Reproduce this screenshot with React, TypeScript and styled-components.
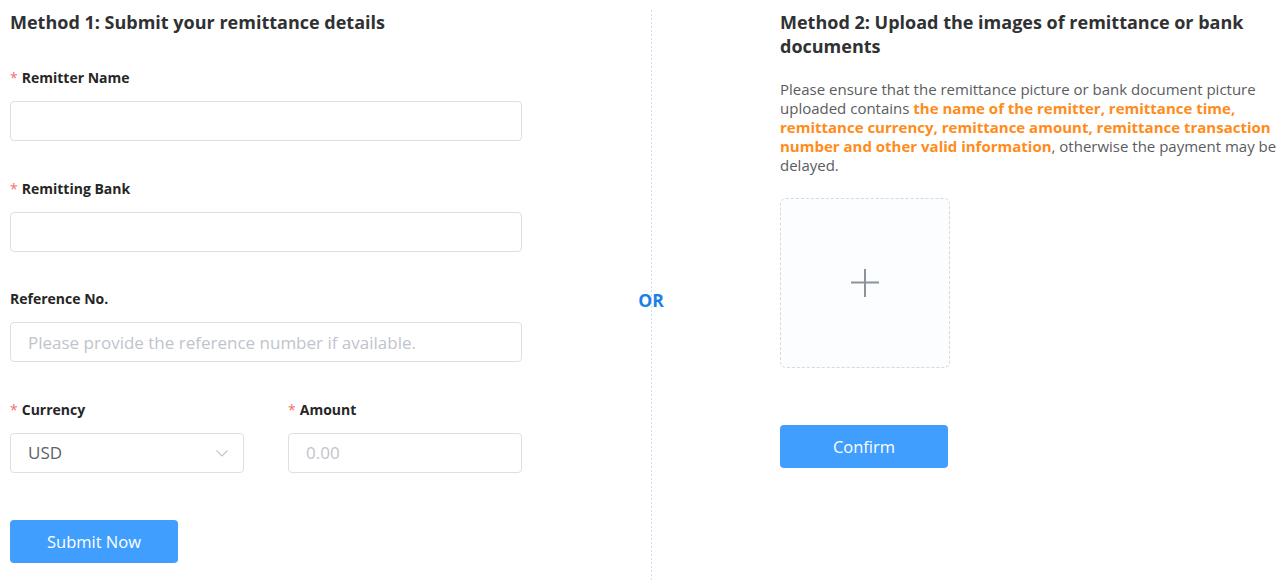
import React from "react";
import styled, { createGlobalStyle } from "styled-components";

const Global = createGlobalStyle`
  html, body { margin: 0; padding: 0; background: #fff; }
  body { font-family: "Open Sans", "Noto Sans", Arial, sans-serif; color: #303133; }
  * { box-sizing: border-box; }
`;

const Page = styled.div`
  display: flex;
  padding: 10px 3px 0 10px;
  min-height: 582px;
`;

const LeftCol = styled.div`
  width: 512px;
  flex: none;
  display: flex;
  flex-direction: column;
`;

const Middle = styled.div`
  width: 258px;
  flex: none;
  position: relative;
  display: flex;
  justify-content: center;
`;

const Divider = styled.div`
  width: 1px;
  height: 572px;
  margin-left: 1px;
  background-image: repeating-linear-gradient(
    to bottom,
    #c4dff9 0,
    #c4dff9 2px,
    transparent 2px,
    transparent 4px
  );
`;

const OrText = styled.div`
  position: absolute;
  top: 279px;
  left: 0;
  right: 0;
  text-align: center;
  font-weight: 700;
  font-size: 17.5px;
  color: #1a7fe6;
  line-height: 22px;
`;

const RightCol = styled.div`
  flex: 1;
  display: flex;
  flex-direction: column;
`;

const Title = styled.h2`
  margin: 0;
  font-size: 18px;
  line-height: 24px;
  font-weight: 700;
  color: #303133;
  padding-right: 6px;
`;

const Form = styled.div`
  margin-top: 34px;
  display: flex;
  flex-direction: column;
  gap: 37.5px;
`;

const Row = styled.div`
  display: flex;
  gap: 44px;
`;

const Field = styled.div<{ $w?: number }>`
  display: flex;
  flex-direction: column;
  gap: 13px;
  width: ${(p) => (p.$w ? `${p.$w}px` : "100%")};
`;

const Label = styled.label`
  font-size: 14px;
  line-height: 20px;
  font-weight: 700;
  color: #262626;
`;

const Star = styled.span`
  color: #f56c6c;
  margin-right: 4px;
  font-weight: 400;
`;

const Input = styled.input`
  width: 100%;
  height: 40px;
  border: 1px solid #dcdfe6;
  border-radius: 4px;
  padding: 0 17px;
  font-family: inherit;
  font-size: 17px;
  color: #606266;
  outline: none;
  background: #fff;
  &::placeholder { color: #c0c4cc; }
`;

const SelectBox = styled.div`
  height: 40px;
  border: 1px solid #dcdfe6;
  border-radius: 4px;
  padding: 0 14px 0 17px;
  display: flex;
  align-items: center;
  justify-content: space-between;
  font-size: 17px;
  color: #606266;
`;

const Button = styled.button`
  width: 168px;
  height: 43px;
  border: none;
  border-radius: 4px;
  background: #409eff;
  color: #fff;
  font-family: inherit;
  font-size: 16.5px;
  cursor: pointer;
`;

const SubmitWrap = styled.div`
  margin-top: 47px;
`;

const Para = styled.p`
  margin: 22px 0 0;
  font-size: 15px;
  line-height: 19px;
  color: #5a5c61;
`;

const Hl = styled.span`
  color: #ff8c1a;
  font-weight: 700;
`;

const Upload = styled.div`
  margin-top: 23px;
  width: 170px;
  height: 170px;
  border: 1px dashed #d9d9d9;
  border-radius: 6px;
  background: #fbfdff;
  display: flex;
  align-items: center;
  justify-content: center;
`;

const ConfirmWrap = styled.div`
  margin-top: 57px;
`;

const Chevron = () => (
  <svg width="14" height="14" viewBox="0 0 14 14" fill="none">
    <path d="M1.5 4.5 L7 10 L12.5 4.5" stroke="#c0c4cc" strokeWidth="1.1" />
  </svg>
);

const Plus = () => (
  <svg width="28" height="28" viewBox="0 0 28 28">
    <rect x="0" y="12.5" width="28" height="2" fill="#8c939d" />
    <rect x="13" y="0" width="2" height="28" fill="#8c939d" />
  </svg>
);

export default function App() {
  return (
    <>
      <Global />
      <Page>
        <LeftCol>
          <Title>Method 1: Submit your remittance details</Title>
          <Form>
            <Field>
              <Label><Star>*</Star>Remitter Name</Label>
              <Input />
            </Field>
            <Field>
              <Label><Star>*</Star>Remitting Bank</Label>
              <Input />
            </Field>
            <Field>
              <Label>Reference No.</Label>
              <Input placeholder="Please provide the reference number if available." />
            </Field>
            <Row>
              <Field $w={234}>
                <Label><Star>*</Star>Currency</Label>
                <SelectBox>
                  <span>USD</span>
                  <Chevron />
                </SelectBox>
              </Field>
              <Field $w={234}>
                <Label><Star>*</Star>Amount</Label>
                <Input placeholder="0.00" />
              </Field>
            </Row>
          </Form>
          <SubmitWrap>
            <Button>Submit Now</Button>
          </SubmitWrap>
        </LeftCol>
        <Middle>
          <Divider />
          <OrText>OR</OrText>
        </Middle>
        <RightCol>
          <Title>Method 2: Upload the images of remittance or bank documents</Title>
          <Para>
            Please ensure that the remittance picture or bank document picture uploaded contains{" "}
            <Hl>
              the name of the remitter, remittance time, remittance currency, remittance amount,
              remittance transaction number and other valid information
            </Hl>
            , otherwise the payment may be delayed.
          </Para>
          <Upload>
            <Plus />
          </Upload>
          <ConfirmWrap>
            <Button>Confirm</Button>
          </ConfirmWrap>
        </RightCol>
      </Page>
    </>
  );
}
